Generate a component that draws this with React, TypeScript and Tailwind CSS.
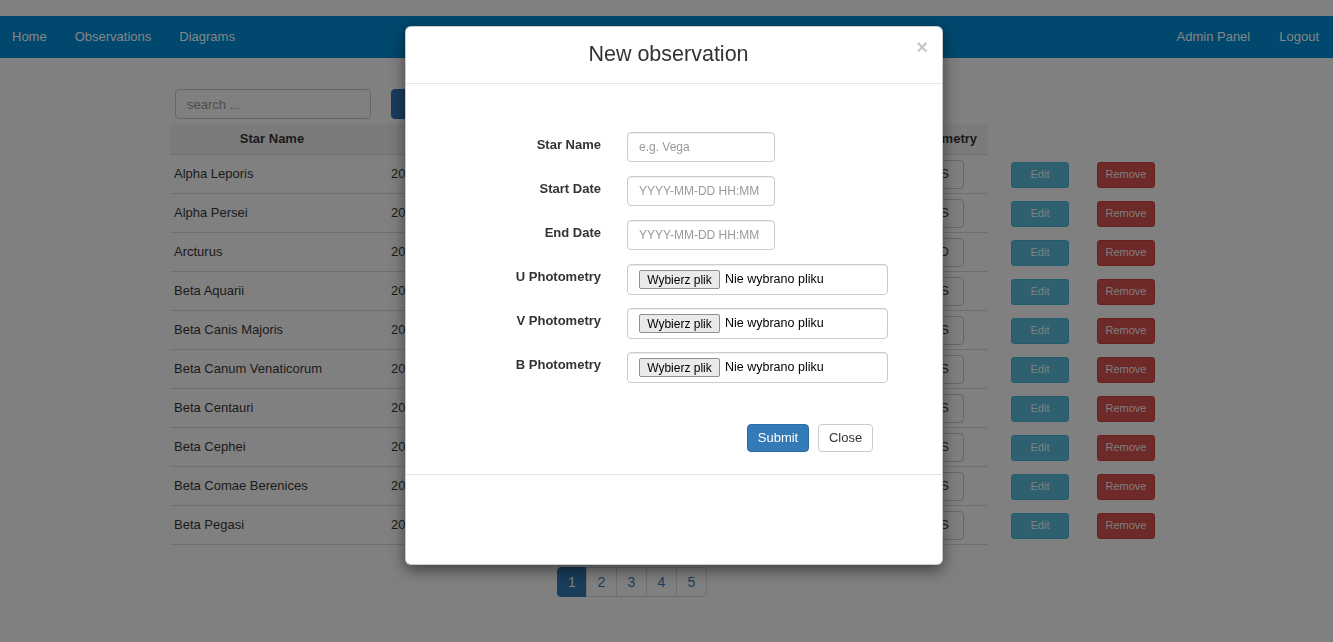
import React from "react";

// Page colours below are the Bootstrap ones as seen through the modal's 50% black backdrop.
const stars = [
  { name: "Alpha Leporis", start: "2016-11-02 21:10", end: "2016-11-03 02:40", phot: "UBVS" },
  { name: "Alpha Persei", start: "2016-10-14 20:05", end: "2016-10-15 01:30", phot: "UBVS" },
  { name: "Arcturus", start: "2016-06-21 22:15", end: "2016-06-22 00:50", phot: "UBVD" },
  { name: "Beta Aquarii", start: "2016-09-03 23:00", end: "2016-09-04 03:20", phot: "UBVS" },
  { name: "Beta Canis Majoris", start: "2017-01-12 19:45", end: "2017-01-12 23:10", phot: "UBVS" },
  { name: "Beta Canum Venaticorum", start: "2016-04-08 21:30", end: "2016-04-09 01:00", phot: "UBVS" },
  { name: "Beta Centauri", start: "2016-05-17 22:40", end: "2016-05-18 02:05", phot: "UBVS" },
  { name: "Beta Cephei", start: "2016-08-25 20:20", end: "2016-08-26 03:45", phot: "UBVS" },
  { name: "Beta Comae Berenices", start: "2016-03-30 21:55", end: "2016-03-31 01:15", phot: "UBVS" },
  { name: "Beta Pegasi", start: "2016-09-19 22:05", end: "2016-09-20 02:30", phot: "UBVS" },
];

function TextField({ placeholder }: { placeholder: string }) {
  return (
    <input
      placeholder={placeholder}
      className="h-[30px] w-[148px] rounded-[4px] border border-[#ccc] px-[11px] text-[12px] text-[#555] shadow-[inset_0_1px_1px_rgba(0,0,0,0.075)] outline-none placeholder:text-[#999]"
    />
  );
}

function FileField() {
  return (
    <div className="flex h-[31px] w-[261px] items-center rounded-[4px] border border-[#ccc] pl-[11px] text-[12px] text-[#222] shadow-[inset_0_1px_1px_rgba(0,0,0,0.075)]">
      <span className="flex h-[19px] w-[81px] items-center justify-center rounded-[2px] border border-[#8f8f8f] bg-[#eaeaea] text-[12px] text-black">
        Wybierz plik
      </span>
      <span className="ml-[5px] text-[12.5px] text-black">Nie wybrano pliku</span>
    </div>
  );
}

const formRows: { label: string; kind: "text" | "file"; placeholder?: string }[] = [
  { label: "Star Name", kind: "text", placeholder: "e.g. Vega" },
  { label: "Start Date", kind: "text", placeholder: "YYYY-MM-DD HH:MM" },
  { label: "End Date", kind: "text", placeholder: "YYYY-MM-DD HH:MM" },
  { label: "U Photometry", kind: "file" },
  { label: "V Photometry", kind: "file" },
  { label: "B Photometry", kind: "file" },
];

export default function App() {
  return (
    <div className="relative min-h-screen bg-[#808080] pt-4 font-['Liberation_Sans',Arial,sans-serif] text-[13px] text-[#1a1a1a]">
      <nav className="flex h-[42px] items-center justify-between bg-[#00486e] pl-[12px] pr-[14px] text-[13px] text-[#878787]">
        <div className="flex gap-[28px]">
          <span>Home</span>
          <span>Observations</span>
          <span>Diagrams</span>
        </div>
        <div className="flex gap-[29px]">
          <span>Admin Panel</span>
          <span>Logout</span>
        </div>
      </nav>

      <div className="pl-[170px] pt-[31px]">
        <div className="flex items-center">
          <input
            placeholder="search ..."
            className="ml-[5px] h-[30px] w-[196px] rounded-[4px] border border-[#666] bg-[#808080] px-[11px] text-[13px] outline-none placeholder:text-[#4d4d4d]"
          />
          <button className="ml-[20px] h-[30px] rounded-[4px] border border-[#17375a] bg-[#1a3d5c] px-[12px] text-[#808080]">
            New observation
          </button>
        </div>

        <div className="mt-[5px] flex h-[31px] w-[818px] items-center border-b border-[#6f6f6f] bg-[#7b7b7b] font-bold">
          <div className="w-[204px] text-center">Star Name</div>
          <div className="w-[186px] text-center">Start Date</div>
          <div className="w-[186px] text-center">End Date</div>
          <div className="w-[242px] pr-[11px] text-right">Photometry</div>
        </div>

        {stars.map((s) => (
          <div key={s.name} className="flex h-[39px] items-center">
            <div className="flex h-full w-[818px] items-center border-b border-[#6f6f6f]">
              <div className="w-[204px] pl-[4px]">{s.name}</div>
              <div className="w-[186px] pl-[17px]">{s.start}</div>
              <div className="w-[186px] pl-[17px]">{s.end}</div>
              <div className="flex w-[242px] justify-end pr-[24px]">
                <span className="flex h-[29px] items-center rounded-[4px] border border-[#666] px-[14px]">
                  {s.phot}
                </span>
              </div>
            </div>
            <button className="ml-[23px] h-[26px] w-[58px] rounded-[3px] border border-[#235c6d] bg-[#2e6070] text-[11px] text-[#808080]">
              Edit
            </button>
            <button className="ml-[28px] h-[26px] w-[58px] rounded-[3px] border border-[#6a201d] bg-[#6d2a28] text-[11px] text-[#808080]">
              Remove
            </button>
          </div>
        ))}

        <div className="ml-[387px] mt-[22px] flex text-[14px]">
          {[1, 2, 3, 4, 5].map((n, i) => (
            <span
              key={n}
              className={
                n === 1
                  ? "flex h-[30px] w-[30px] items-center justify-center rounded-l-[4px] border border-[#1a3d5c] bg-[#1a3d5c] text-[#808080]"
                  : i === 4
                  ? "-ml-px flex h-[30px] w-[31px] items-center justify-center rounded-r-[4px] border border-[#6f6f6f] text-[#1a3d5c]"
                  : "-ml-px flex h-[30px] w-[31px] items-center justify-center border border-[#6f6f6f] text-[#1a3d5c]"
              }
            >
              {n}
            </span>
          ))}
        </div>
      </div>

      <div className="fixed left-[405px] top-[26px] z-20 flex h-[539px] w-[538px] flex-col rounded-[6px] border border-[rgba(0,0,0,0.2)] bg-white shadow-[0_5px_15px_rgba(0,0,0,0.5)]">
        <div className="relative flex h-[57px] items-center justify-center border-b border-[#e5e5e5] pr-[11px]">
          <h4 className="text-[21.5px] leading-none text-[#333]">New observation</h4>
          <span className="absolute right-[14px] top-[10px] text-[20px] font-bold leading-none text-[#c9c9c9]">×</span>
        </div>

        <div className="h-[391px] border-b border-[#e5e5e5] pt-[48px] text-[#333]">
          {formRows.map((r) => (
            <div key={r.label} className="flex h-[44px] items-start">
              <label className="w-[195px] pt-[3px] text-right text-[13px] font-bold leading-[20px]">
                {r.label}
              </label>
              <div className="ml-[26px]">
                {r.kind === "text" ? <TextField placeholder={r.placeholder || ""} /> : <FileField />}
              </div>
            </div>
          ))}
          <div className="ml-[341px] mt-[28px] flex gap-[9px]">
            <button className="h-[28px] w-[62px] rounded-[4px] border border-[#2e6da4] bg-[#337ab7] text-[13px] text-white">
              Submit
            </button>
            <button className="h-[28px] w-[55px] rounded-[4px] border border-[#ccc] bg-white text-[13px] text-[#333]">
              Close
            </button>
          </div>
        </div>

        <div className="flex-1" />
      </div>
    </div>
  );
}
